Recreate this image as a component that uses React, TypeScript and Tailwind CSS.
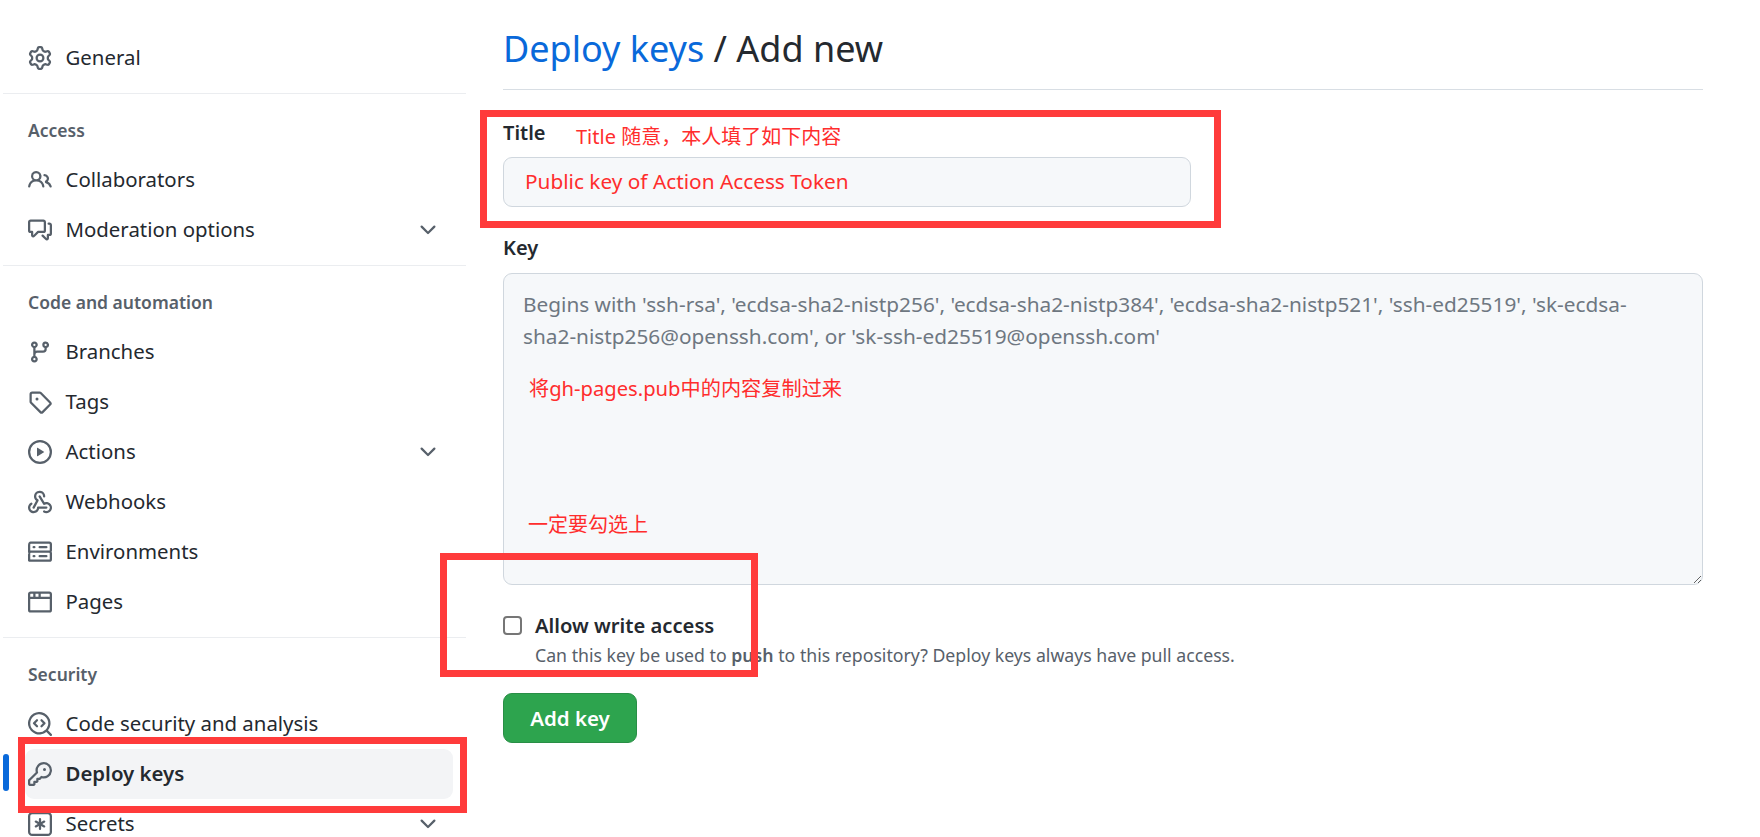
import React from "react";

const font = { fontFamily: '"Noto Sans", "Noto Sans CJK SC", sans-serif' };

const paths: Record<string, string[]> = {
  gear: ["M8 0a8.2 8.2 0 0 1 .701.031C9.444.095 9.99.645 10.16 1.29l.288 1.107c.018.066.079.158.212.224.231.114.454.243.668.386.123.082.233.09.299.071l1.103-.303c.644-.176 1.392.021 1.82.63.27.385.506.792.704 1.218.315.675.111 1.422-.364 1.891l-.814.806c-.049.048-.098.147-.088.294.016.257.016.515 0 .772-.01.147.038.246.088.294l.814.806c.475.469.679 1.216.364 1.891a7.977 7.977 0 0 1-.704 1.217c-.428.61-1.176.807-1.82.63l-1.102-.302c-.067-.019-.177-.011-.3.071a5.909 5.909 0 0 1-.668.386c-.133.066-.194.158-.211.224l-.29 1.106c-.168.646-.715 1.196-1.458 1.26a8.006 8.006 0 0 1-1.402 0c-.743-.064-1.289-.614-1.458-1.26l-.289-1.106c-.018-.066-.079-.158-.212-.224a5.738 5.738 0 0 1-.668-.386c-.123-.082-.233-.09-.299-.071l-1.103.303c-.644.176-1.392-.021-1.82-.63a8.12 8.12 0 0 1-.704-1.218c-.315-.675-.111-1.422.363-1.891l.815-.806c.05-.048.098-.147.088-.294a6.214 6.214 0 0 1 0-.772c.01-.147-.038-.246-.088-.294l-.815-.806C.635 6.045.431 5.298.746 4.623a7.92 7.92 0 0 1 .704-1.217c.428-.61 1.176-.807 1.82-.63l1.102.302c.067.019.177.011.3-.071.214-.143.437-.272.668-.386.133-.066.194-.158.211-.224l.29-1.106C6.009.645 6.556.095 7.299.03 7.53.01 7.764 0 8 0Zm-.571 1.525c-.036.003-.108.036-.137.146l-.289 1.105c-.147.561-.549.967-.998 1.189-.173.086-.34.183-.5.29-.417.278-.97.423-1.529.27l-1.103-.303c-.109-.03-.175.016-.195.045-.22.312-.412.644-.573.99-.014.031-.021.11.059.19l.815.806c.411.406.562.957.53 1.456a4.709 4.709 0 0 0 0 .582c.032.499-.119 1.05-.53 1.456l-.815.806c-.081.08-.073.159-.059.19.162.346.353.677.573.989.02.03.085.076.195.046l1.102-.303c.56-.153 1.113-.008 1.53.27.161.107.328.204.501.29.447.222.85.629.997 1.189l.289 1.105c.029.109.101.143.137.146a6.6 6.6 0 0 0 1.142 0c.036-.003.108-.036.137-.146l.289-1.105c.147-.561.549-.967.998-1.189.173-.086.34-.183.5-.29.417-.278.97-.423 1.529-.27l1.103.303c.109.029.175-.016.195-.045.22-.313.411-.644.573-.99.014-.031.021-.11-.059-.19l-.815-.806c-.411-.406-.562-.957-.53-1.456a4.709 4.709 0 0 0 0-.582c-.032-.499.119-1.05.53-1.456l.815-.806c.081-.08.073-.159.059-.19a6.464 6.464 0 0 0-.573-.989c-.02-.03-.085-.076-.195-.046l-1.102.303c-.56.153-1.113.008-1.53-.27a4.44 4.44 0 0 0-.501-.29c-.447-.222-.85-.629-.997-1.189l-.289-1.105c-.029-.11-.101-.143-.137-.146a6.6 6.6 0 0 0-1.142 0ZM11 8a3 3 0 1 1-6 0 3 3 0 0 1 6 0ZM9.5 8a1.5 1.5 0 1 0-3.001.001A1.5 1.5 0 0 0 9.5 8Z"],
  people: ["M2 5.5a3.5 3.5 0 1 1 5.898 2.549 5.508 5.508 0 0 1 3.034 4.084.75.75 0 1 1-1.482.235 4 4 0 0 0-7.9 0 .75.75 0 0 1-1.482-.236A5.507 5.507 0 0 1 3.102 8.05 3.493 3.493 0 0 1 2 5.5ZM11 4a3.001 3.001 0 0 1 2.22 5.018 5.01 5.01 0 0 1 2.56 3.012.749.749 0 0 1-.885.954.752.752 0 0 1-.549-.514 3.507 3.507 0 0 0-2.522-2.372.75.75 0 0 1-.574-.73v-.352a.75.75 0 0 1 .416-.672A1.5 1.5 0 0 0 11 5.5.75.75 0 0 1 11 4Zm-5.5-.5a2 2 0 1 0-.001 3.999A2 2 0 0 0 5.5 3.5Z"],
  comment: ["M1.75 1h8.5c.966 0 1.75.784 1.75 1.75v5.5A1.75 1.75 0 0 1 10.25 10H7.061l-2.574 2.573A1.458 1.458 0 0 1 2 11.543V10h-.25A1.75 1.75 0 0 1 0 8.25v-5.5C0 1.784.784 1 1.75 1ZM1.5 2.75v5.5c0 .138.112.25.25.25h1a.75.75 0 0 1 .75.75v2.19l2.72-2.72a.749.749 0 0 1 .53-.22h3.5a.25.25 0 0 0 .25-.25v-5.5a.25.25 0 0 0-.25-.25h-8.5a.25.25 0 0 0-.25.25Zm13 2a.25.25 0 0 0-.25-.25h-.5a.75.75 0 0 1 0-1.5h.5c.966 0 1.75.784 1.75 1.75v5.5A1.75 1.75 0 0 1 14.25 12H14v1.543a1.458 1.458 0 0 1-2.487 1.03L9.22 12.28a.749.749 0 0 1 .326-1.275.749.749 0 0 1 .734.215l2.22 2.22v-2.19a.75.75 0 0 1 .75-.75h1a.25.25 0 0 0 .25-.25Z"],
  branch: ["M9.5 3.25a2.25 2.25 0 1 1 3 2.122V6A2.5 2.5 0 0 1 10 8.5H6a1 1 0 0 0-1 1v1.128a2.251 2.251 0 1 1-1.5 0V5.372a2.25 2.25 0 1 1 1.5 0v1.836A2.493 2.493 0 0 1 6 7h4a1 1 0 0 0 1-1v-.628A2.25 2.25 0 0 1 9.5 3.25Zm-6 0a.75.75 0 1 0 1.5 0 .75.75 0 0 0-1.5 0Zm8.25-.75a.75.75 0 1 0 0 1.5.75.75 0 0 0 0-1.5ZM4.25 12a.75.75 0 1 0 0 1.5.75.75 0 0 0 0-1.5Z"],
  tag: ["M1 7.775V2.75C1 1.784 1.784 1 2.75 1h5.025c.464 0 .91.184 1.238.513l6.25 6.25a1.75 1.75 0 0 1 0 2.474l-5.026 5.026a1.75 1.75 0 0 1-2.474 0l-6.25-6.25A1.752 1.752 0 0 1 1 7.775Zm1.5 0c0 .066.026.13.073.177l6.25 6.25a.25.25 0 0 0 .354 0l5.025-5.025a.25.25 0 0 0 0-.354l-6.25-6.25a.25.25 0 0 0-.177-.073H2.75a.25.25 0 0 0-.25.25ZM6 5a1 1 0 1 1 0 2 1 1 0 0 1 0-2Z"],
  play: ["M8 0a8 8 0 1 1 0 16A8 8 0 0 1 8 0ZM1.5 8a6.5 6.5 0 1 0 13 0 6.5 6.5 0 0 0-13 0Zm4.879-2.773 4.264 2.559a.25.25 0 0 1 0 .428l-4.264 2.559A.25.25 0 0 1 6 10.559V5.442a.25.25 0 0 1 .379-.215Z"],
  webhook: [
    "M5.5 4.25a2.25 2.25 0 0 1 4.5 0 .75.75 0 0 0 1.5 0 3.75 3.75 0 1 0-6.14 2.889l-2.272 4.258a.75.75 0 0 0 1.324.706L7 7.25a.75.75 0 0 0-.309-1.015A2.25 2.25 0 0 1 5.5 4.25Z",
    "M7.364 3.607a.75.75 0 0 1 1.03.257l2.608 4.349a3.75 3.75 0 1 1-.628 6.785.75.75 0 0 1 .752-1.299 2.25 2.25 0 1 0-.033-3.88.75.75 0 0 1-1.03-.256L7.107 4.636a.75.75 0 0 1 .257-1.03Z",
    "M2.9 8.776A.75.75 0 0 1 2.625 9.8 2.25 2.25 0 1 0 6 11.75a.75.75 0 0 1 .75-.751h5.5a.75.75 0 0 1 0 1.5H7.425a3.751 3.751 0 1 1-5.55-3.998.75.75 0 0 1 1.024.274Z",
  ],
  server: ["M1.75 1h12.5c.966 0 1.75.784 1.75 1.75v4c0 .372-.116.717-.314 1 .198.283.314.628.314 1v4a1.75 1.75 0 0 1-1.75 1.75H1.75A1.75 1.75 0 0 1 0 13.75v-4c0-.372.116-.717.314-1a1.739 1.739 0 0 1-.314-1v-4C0 1.784.784 1 1.75 1ZM1.5 2.75v4c0 .138.112.25.25.25h12.5a.25.25 0 0 0 .25-.25v-4a.25.25 0 0 0-.25-.25H1.75a.25.25 0 0 0-.25.25Zm.25 5.75a.25.25 0 0 0-.25.25v4c0 .138.112.25.25.25h12.5a.25.25 0 0 0 .25-.25v-4a.25.25 0 0 0-.25-.25ZM7 4.75A.75.75 0 0 1 7.75 4h4.5a.75.75 0 0 1 0 1.5h-4.5A.75.75 0 0 1 7 4.75ZM7.75 10h4.5a.75.75 0 0 1 0 1.5h-4.5a.75.75 0 0 1 0-1.5ZM3 4.75A.75.75 0 0 1 3.75 4h.5a.75.75 0 0 1 0 1.5h-.5A.75.75 0 0 1 3 4.75ZM3.75 10h.5a.75.75 0 0 1 0 1.5h-.5a.75.75 0 0 1 0-1.5Z"],
  browser: ["M0 2.75C0 1.784.784 1 1.75 1h12.5c.966 0 1.75.784 1.75 1.75v10.5A1.75 1.75 0 0 1 14.25 15H1.75A1.75 1.75 0 0 1 0 13.25ZM14.5 6h-13v7.25c0 .138.112.25.25.25h12.5a.25.25 0 0 0 .25-.25Zm-6-3.5v2h6v-1.75a.25.25 0 0 0-.25-.25ZM5 2.5v2h2v-2Zm-3.25 0a.25.25 0 0 0-.25.25V4.5h2v-2Z"],
  codescan: [
    "M8.47 4.97a.75.75 0 0 0 0 1.06L9.94 7.5 8.47 8.97a.75.75 0 1 0 1.06 1.06l2-2a.75.75 0 0 0 0-1.06l-2-2a.75.75 0 0 0-1.06 0ZM6.53 6.03a.75.75 0 0 0-1.06-1.06l-2 2a.75.75 0 0 0 0 1.06l2 2a.75.75 0 1 0 1.06-1.06L5.06 7.5l1.47-1.47Z",
    "M12.246 13.307a7.501 7.501 0 1 1 1.06-1.06l2.474 2.473a.749.749 0 0 1-.326 1.275.749.749 0 0 1-.734-.215ZM1.5 7.5a6.002 6.002 0 0 0 3.608 5.504 6.002 6.002 0 0 0 6.486-1.117.748.748 0 0 1 .292-.293A6 6 0 1 0 1.5 7.5Z",
  ],
  key: ["M10.5 0a5.499 5.499 0 1 1-1.288 10.848l-.932.932a.749.749 0 0 1-.53.22H7v.75a.749.749 0 0 1-.22.53l-.5.5a.749.749 0 0 1-.53.22H5v.75a.749.749 0 0 1-.22.53l-.5.5a.749.749 0 0 1-.53.22h-2A1.75 1.75 0 0 1 0 14.25v-2c0-.199.079-.389.22-.53l4.932-4.932A5.5 5.5 0 0 1 10.5 0Zm-4 5.5c-.001.431.069.86.205 1.269a.75.75 0 0 1-.181.768L1.5 12.56v1.69c0 .138.112.25.25.25h1.69l.06-.06v-1.19a.75.75 0 0 1 .75-.75h1.19l.06-.06v-1.19a.75.75 0 0 1 .75-.75h1.19l1.023-1.025a.75.75 0 0 1 .768-.18A4 4 0 1 0 6.5 5.5ZM11 6a1 1 0 1 1 0-2 1 1 0 0 1 0 2Z"],
  asterisk: [
    "M0 2.75A2.75 2.75 0 0 1 2.75 0h10.5A2.75 2.75 0 0 1 16 2.75v10.5A2.75 2.75 0 0 1 13.25 16H2.75A2.75 2.75 0 0 1 0 13.25Zm1.5 0v10.5c0 .69.56 1.25 1.25 1.25h10.5c.69 0 1.25-.56 1.25-1.25V2.75c0-.69-.56-1.25-1.25-1.25H2.75c-.69 0-1.25.56-1.25 1.25Z",
    "M8 4a.75.75 0 0 1 .75.75V6.7l1.69-.975a.75.75 0 0 1 .75 1.3L9.5 8l1.69.976a.75.75 0 0 1-.75 1.298L8.75 9.3v1.951a.75.75 0 0 1-1.5 0V9.299l-1.69.975a.75.75 0 0 1-.75-1.298L6.5 8l-1.69-.975a.75.75 0 0 1 .75-1.3l1.69.976V4.75A.75.75 0 0 1 8 4Z",
  ],
  chevron: ["M12.78 5.22a.749.749 0 0 1 0 1.06l-4.25 4.25a.749.749 0 0 1-1.06 0L3.22 6.28a.749.749 0 1 1 1.06-1.06L8 8.939l3.72-3.719a.749.749 0 0 1 1.06 0Z"],
};

function Octicon({ name }: { name: string }) {
  return (
    <svg viewBox="0 0 16 16" width={24} height={24} fill="currentColor" className="shrink-0 text-[#57606a]">
      {paths[name].map((d) => (
        <path key={d} d={d} />
      ))}
    </svg>
  );
}

function Row({ icon, label, chevron, active }: { icon: string; label: string; chevron?: boolean; active?: boolean }) {
  return (
    <div className={`relative flex h-[50px] items-center rounded-[9px] pl-[3px] pr-[13px] ${active ? "bg-[#f3f4f6] font-semibold" : ""}`}>
      {active && <div className="absolute left-[-22px] top-[5px] h-[37px] w-[6px] rounded-[3px] bg-[#0969da]" />}
      <Octicon name={icon} />
      <span className="ml-[13.5px] flex-1 pb-[2px] text-[20.4px] text-[#24292f]">{label}</span>
      {chevron && <Octicon name="chevron" />}
    </div>
  );
}

function Section({ title, children }: { title: string; children: React.ReactNode }) {
  return (
    <div className="mt-[10px] border-t border-[#ebedf0] pt-[23px]">
      <div className="mb-[12px] h-[26px] pl-[25px] text-[17.5px] font-semibold leading-[26px] text-[#57606a]">{title}</div>
      <div className="ml-[22px] mr-[13px]">{children}</div>
    </div>
  );
}

export default function App() {
  return (
    <div className="relative flex h-[837px] w-[1760px] overflow-hidden bg-white" style={font}>
      <aside className="ml-[3px] w-[463px] shrink-0 pt-[33px]">
        <div className="ml-[22px] mr-[13px]">
          <Row icon="gear" label="General" />
        </div>
        <Section title="Access">
          <Row icon="people" label="Collaborators" />
          <Row icon="comment" label="Moderation options" chevron />
        </Section>
        <Section title="Code and automation">
          <Row icon="branch" label="Branches" />
          <Row icon="tag" label="Tags" />
          <Row icon="play" label="Actions" chevron />
          <Row icon="webhook" label="Webhooks" />
          <Row icon="server" label="Environments" />
          <Row icon="browser" label="Pages" />
        </Section>
        <Section title="Security">
          <Row icon="codescan" label="Code security and analysis" />
          <Row icon="key" label="Deploy keys" active />
          <Row icon="asterisk" label="Secrets" chevron />
        </Section>
      </aside>

      <main className="ml-[37px] w-[1200px] shrink-0">
        <h1 className="flex h-[90px] items-center border-b border-[#d8dee4] pt-[8px] text-[36px] font-normal text-[#24292f]">
          <span className="text-[#0969da]">Deploy keys</span>
          <span className="whitespace-pre"> / Add new</span>
        </h1>
        <label className="mt-[29px] block h-[28px] text-[20px] font-semibold leading-[28px] text-[#24292f]">Title</label>
        <input
          readOnly
          defaultValue="Public key of Action Access Token"
          className="mt-[10px] block h-[50px] w-[688px] rounded-[9px] border border-[#d0d7de] bg-[#f6f8fa] px-[21px] pb-[3px] text-[20.8px] text-[#ff2d2d] outline-none"
        />
        <label className="mt-[27px] block h-[28px] text-[20px] font-semibold leading-[28px] text-[#24292f]">Key</label>
        <textarea
          readOnly
          placeholder="Begins with 'ssh-rsa', 'ecdsa-sha2-nistp256', 'ecdsa-sha2-nistp384', 'ecdsa-sha2-nistp521', 'ssh-ed25519', 'sk-ecdsa-sha2-nistp256@openssh.com', or 'sk-ssh-ed25519@openssh.com'"
          className="mt-[11px] block h-[312px] w-full rounded-[9px] border border-[#d0d7de] bg-[#f6f8fa] pb-[15px] pl-[19px] pr-[50px] pt-[14px] text-[20.8px] leading-[32px] outline-none placeholder:text-[#6e7781]"
        />
        <div className="mt-[26px] flex items-center">
          <input type="checkbox" className="h-[19px] w-[19px] shrink-0 appearance-none rounded-[4px] border-2 border-[#767676] bg-white" />
          <span className="ml-[13px] text-[20.2px] font-semibold leading-[28px] text-[#24292f]">Allow write access</span>
        </div>
        <p className="ml-[32px] mt-[3px] h-[27px] text-[17.7px] leading-[27px] text-[#57606a]">
          Can this key be used to <b className="font-semibold">push</b> to this repository? Deploy keys always have pull access.
        </p>
        <button className="mt-[24px] block h-[50px] w-[134px] rounded-[9px] border border-[#298e46] bg-[#2da44e] text-[20.5px] font-semibold text-white">Add key</button>
      </main>

      <div className="pointer-events-none absolute left-[480px] top-[110px] h-[118px] w-[741px] border-[7px] border-[#ff3b3b]" />
      <div className="pointer-events-none absolute left-[440px] top-[553px] h-[124px] w-[318px] border-[7px] border-[#ff3b3b]" />
      <div className="pointer-events-none absolute left-[18px] top-[737px] h-[76px] w-[449px] border-[7px] border-[#ff3b3b]" />

      <span className="absolute left-[576px] top-[122px] text-[20px] leading-[30px] text-[#ff2d2d]">Title 随意，本人填了如下内容</span>
      <span className="absolute left-[529px] top-[373px] text-[20.2px] leading-[30px] text-[#ff2d2d]">将gh-pages.pub中的内容复制过来</span>
      <span className="absolute left-[528px] top-[510px] text-[20px] leading-[30px] text-[#ff2d2d]">一定要勾选上</span>
    </div>
  );
}
